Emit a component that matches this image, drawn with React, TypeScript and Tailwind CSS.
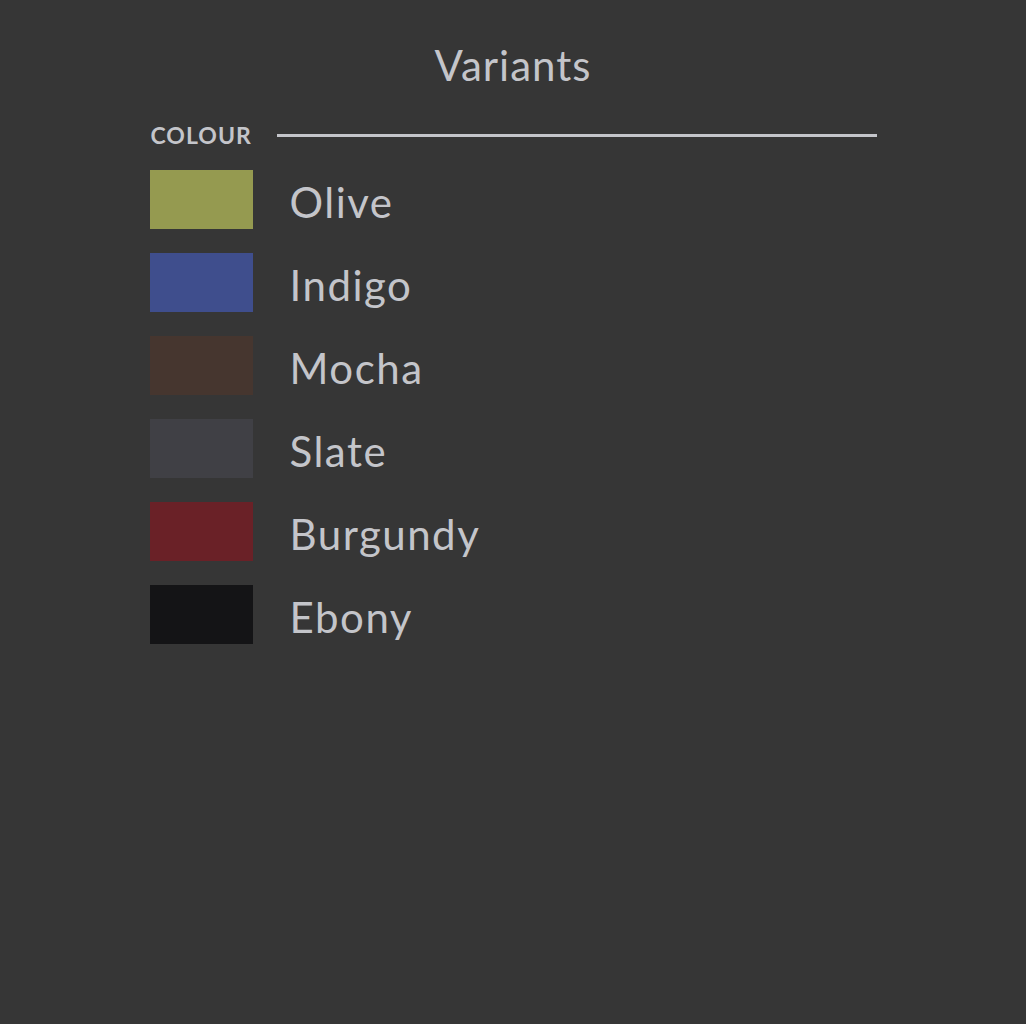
const variants = [
  { name: 'Olive', color: 'bg-[#959a50]' },
  { name: 'Indigo', color: 'bg-[#3f4e8d]' },
  { name: 'Mocha', color: 'bg-[#46362f]' },
  { name: 'Slate', color: 'bg-[#404045]' },
  { name: 'Burgundy', color: 'bg-[#6a2127]' },
  { name: 'Ebony', color: 'bg-[#141416]' },
];

export default function App() {
  return (
    <div className="min-h-[1024px] w-full bg-[#363636] font-['Lato',sans-serif] text-[#c4c5ca]">
      <div className="mx-auto w-[727px] pt-[40px]">
        <h1 className="text-center text-[42px] leading-[50px] tracking-[1px]">Variants</h1>
        <div className="mt-[30px] flex items-center gap-[25px]">
          <span className="pl-[1px] text-[23px] font-bold leading-[30px] tracking-[1px]">COLOUR</span>
          <div className="h-[3px] flex-1 bg-[#c4c5ca]" />
        </div>
        <ul className="mt-[20px] flex flex-col gap-[24px]">
          {variants.map((v) => (
            <li key={v.name} className="flex items-center gap-[37px]">
              <div className={`h-[59px] w-[103px] ${v.color}`} />
              <span className="pt-[4px] text-[42px] leading-[50px] tracking-[1.5px]">{v.name}</span>
            </li>
          ))}
        </ul>
      </div>
    </div>
  );
}
